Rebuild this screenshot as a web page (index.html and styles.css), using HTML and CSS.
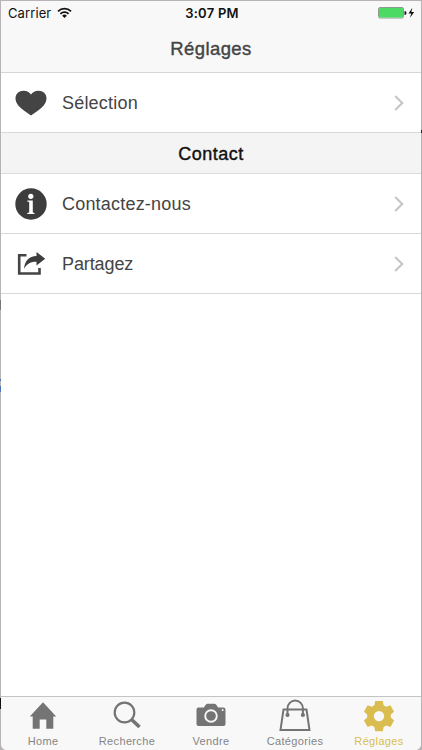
FILE: index.html
```html
<!DOCTYPE html>
<html lang="fr">
<head>
    <meta charset="UTF-8">
    <meta name="viewport" content="width=device-width, initial-scale=1.0">
    <title>Réglages</title>
    <link rel="stylesheet" href="styles.css">
</head>
<body>
    <div class="screen">
        <!-- Status bar and title -->
        <header class="header">
            <div class="status-bar">
                <div class="carrier">
                    <span>Carrier</span>
                    <svg width="15" height="12" viewBox="0 0 15 12" fill="none" stroke="#111" stroke-width="1.8">
                        <path d="M1 4.4a9.2 9.2 0 0 1 13 0M3.4 6.9a5.8 5.8 0 0 1 8.2 0"/>
                        <path d="M7.5 11L5.2 8.7a3.3 3.3 0 0 1 4.6 0z" fill="#111" stroke="none"/>
                    </svg>
                </div>
                <div class="time">3:07 PM</div>
                <div class="battery">
                    <svg width="38" height="12" viewBox="0 0 38 12">
                        <rect x=".5" y=".5" width="25" height="10.5" rx="1.5" fill="#fff" stroke="#8b9b8d"/>
                        <rect x="1" y="1" width="24" height="9.5" rx="1" fill="#4cd964"/>
                        <path d="M26.5 4a2 2 0 0 1 0 4z" fill="#111"/>
                        <path d="M34.3.8L30.5 6.5h2.7l-1.2 4.3 4.2-5.7h-2.8z" fill="#111"/>
                    </svg>
                </div>
            </div>
            <h1 class="title">Réglages</h1>
        </header>

        <!-- Settings list -->
        <main class="list">
            <a class="row">
                <svg class="row-icon" width="32" height="32" viewBox="0 0 32 32">
                    <path d="M16 28.5C12.500 26 7.500 23.200 3.500 18.800C-1 13.500-.2 7.200 4.200 4.800C8.500 2.600 13.700 3.700 16 7.500C18.300 3.700 23.500 2.600 27.800 4.800C32.200 7.200 33 13.500 28.500 18.800C24.500 23.200 19.500 26 16 28.500z" fill="#444"/>
                </svg>
                <span class="row-label">Sélection</span>
                <svg class="chevron" width="10" height="18" viewBox="0 0 10 18"><path d="M1.200 2l7 7-7 7"/></svg>
            </a>
            <h2 class="section">Contact</h2>
            <a class="row">
                <svg class="row-icon" width="32" height="32" viewBox="0 0 32 32">
                    <circle cx="16" cy="16" r="15.700" fill="#3d3d3d"/>
                    <circle cx="15.800" cy="8.300" r="2.600" fill="#fff"/>
                    <path d="M12.300 12.500h5.500v12l1.700.5v1H12.300v-1l1.900-.5V14l-1.900-.5z" fill="#fff"/>
                </svg>
                <span class="row-label">Contactez-nous</span>
                <svg class="chevron" width="10" height="18" viewBox="0 0 10 18"><path d="M1.200 2l7 7-7 7"/></svg>
            </a>
            <a class="row">
                <svg class="row-icon" width="32" height="32" viewBox="0 0 32 32">
                    <path d="M11.500 7.200H4.200v18.300h20.300V20" fill="none" stroke="#444" stroke-width="2.600"/>
                    <path d="M21.500 4l8.700 6.700-8.700 6.800v-3.800C16 13.700 12 15.500 9 20.800C9.800 12.700 14 8.200 21.500 7.900z" fill="#3d3d3d"/>
                </svg>
                <span class="row-label narrow">Partagez</span>
                <svg class="chevron" width="10" height="18" viewBox="0 0 10 18"><path d="M1.200 2l7 7-7 7"/></svg>
            </a>
        </main>

        <!-- Tab bar -->
        <nav class="tabs">
            <a class="tab">
                <svg width="34" height="34" viewBox="0 0 34 34" fill="#747474">
                    <path d="M17 3.200L30.200 17.500h-2.900v12.200h-7V20.500h-6.600v9.200h-7V17.500H3.800z"/>
                </svg>
                <span>Home</span>
            </a>
            <a class="tab">
                <svg width="34" height="34" viewBox="0 0 34 34" fill="none" stroke="#747474">
                    <circle cx="14.500" cy="13.500" r="9.800" stroke-width="2.200"/>
                    <path d="M21.500 20.500l8 7.500" stroke-width="3.600"/>
                </svg>
                <span>Recherche</span>
            </a>
            <a class="tab">
                <svg width="34" height="34" viewBox="0 0 34 34">
                    <path d="M4.500 8.500h5.300l2.200-3q.5-.8 1.500-.8h7q1 0 1.500.8l2.200 3h5.300q2 0 2 2V25q0 2-2 2h-25q-2 0-2-2V10.500q0-2 2-2z" fill="#747474"/>
                    <circle cx="17" cy="17" r="5.800" fill="none" stroke="#f8f8f8" stroke-width="1.900"/>
                    <circle cx="28.600" cy="11" r="1" fill="#f8f8f8"/>
                </svg>
                <span>Vendre</span>
            </a>
            <a class="tab">
                <svg width="34" height="34" viewBox="0 0 34 34" fill="none" stroke="#747474" stroke-width="2">
                    <path d="M5.500 10.500h23l3 20.500H2.500z"/>
                    <path d="M9.500 15.500V9.300a7.700 7.700 0 0 1 15.400 0v6.200"/>
                    <circle cx="9.500" cy="16" r="2.100" fill="#747474" stroke="none"/>
                    <circle cx="24.900" cy="16" r="2.100" fill="#747474" stroke="none"/>
                </svg>
                <span>Catégories</span>
            </a>
            <a class="tab active">
                <svg width="34" height="34" viewBox="0 0 34 34">
                    <path d="M13.200 2h7.600l.8 4.300 2.700 1.500 4.100-1.500 3.700 6.500-3.300 2.800v3l3.300 2.800-3.700 6.500-4.100-1.500-2.700 1.500-.8 4.300h-7.600l-.8-4.300-2.700-1.500-4.100 1.500-3.700-6.500 3.300-2.800v-3l-3.300-2.800 3.700-6.500 4.100 1.500 2.700-1.500z" fill="#dabd50"/>
                    <circle cx="17" cy="17.100" r="5.200" fill="#f8f8f8"/>
                </svg>
                <span>Réglages</span>
            </a>
        </nav>
    </div>
</body>
</html>
```

FILE: styles.css
```css
* {
    box-sizing: border-box;
}
body {
    margin: 0;
    font-family: "Liberation Sans", Arial, sans-serif;
    color: #444;
    /* page behind the window, seen along its edges */
    background-color: #b8b4b6;
    background-image:
        linear-gradient(#111, #111),
        linear-gradient(#777, #777),
        linear-gradient(#4a74b4, #4a74b4),
        linear-gradient(#4a74b4, #4a74b4),
        linear-gradient(#222, #222);
    background-repeat: no-repeat;
    background-size: 1px 11px, 1px 10px, 1px 2px, 1px 6px, 1px 3px;
    background-position: 0 698px, 0 300px, 0 379px, 0 386px, 421px 130px;
}
svg {
    display: block;
}
.screen {
    display: flex;
    flex-direction: column;
    width: 420px;
    height: 750px;
    margin: 0 1px;
    border-top: 1px solid #b8b4b6;
    border-radius: 0 0 6px 6px;
    background: #fff;
    overflow: hidden;
}
.header {
    height: 72px;
    background: #f8f8f8;
    border-bottom: 1px solid #d6d6d6;
}
.status-bar {
    display: grid;
    grid-template-columns: 1fr auto 1fr;
    align-items: center;
    height: 24px;
    padding: 0 5px 0 7px;
    color: #111;
    font-family: Inter, sans-serif;
    font-size: 13px;
}
.carrier {
    display: flex;
    align-items: center;
    gap: 6px;
    letter-spacing: 0.1px;
}
.time {
    font-weight: 600;
    letter-spacing: 0.25px;
}
.battery {
    justify-self: end;
}
.title {
    margin: 0;
    line-height: 48px;
    text-align: center;
    font-size: 18.5px;
    font-weight: normal;
    letter-spacing: 0.4px;
    -webkit-text-stroke: 0.4px #444;
}
.list {
    flex: 1;
}
.row {
    display: flex;
    align-items: center;
    height: 60px;
    padding: 0 17px 0 14px;
    border-bottom: 1px solid #d8d8d8;
}
.row-label {
    flex: 1;
    margin-left: 15px;
    padding-top: 2px;
    font-size: 18px;
    letter-spacing: 0.2px;
}
.row-label.narrow {
    letter-spacing: -0.1px;
}
.chevron {
    fill: none;
    stroke: #c7c7c7;
    stroke-width: 2.2;
}
.section {
    margin: 0;
    height: 41px;
    padding-top: 1px;
    line-height: 41px;
    border-bottom: 1px solid #dcdcdc;
    background: #f4f4f4;
    color: #111;
    text-align: center;
    font-size: 18px;
    font-weight: normal;
    letter-spacing: 0.5px;
    -webkit-text-stroke: 0.4px #111;
}
.tabs {
    display: grid;
    grid-template-columns: repeat(5, 1fr);
    height: 54px;
    background: #f8f8f8;
    border-top: 1px solid #c4c4c4;
}
.tab {
    display: flex;
    flex-direction: column;
    align-items: center;
    padding-top: 2px;
    color: #858585;
    font-size: 11px;
    line-height: 16px;
    letter-spacing: 0.35px;
}
.tab.active {
    color: #dabd50;
}
```
